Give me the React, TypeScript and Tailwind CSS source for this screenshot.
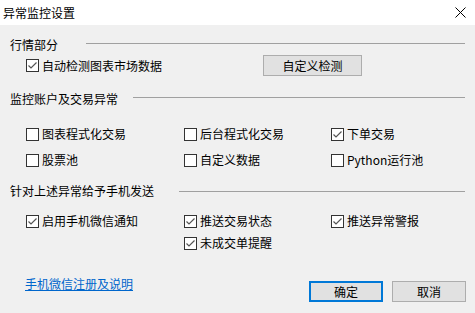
import React from "react";

const Check = ({ checked, label }: { checked?: boolean; label: string }) => {
  return (
    <div className="flex items-center h-[20px]">
      <span className="w-[13px] h-[13px] border border-[#333333] bg-white flex items-center justify-center shrink-0">
        {checked ? (
          <svg width="11" height="11" viewBox="0 0 11 11">
            <path d="M1.5 5.5 L4 8 L9.5 2.5" stroke="#555555" strokeWidth="1.2" fill="none" />
          </svg>
        ) : null}
      </span>
      <span className="ml-[3px] text-[12px] leading-[16px] text-black whitespace-nowrap">{label}</span>
    </div>
  );
};

const Seccion = ({ titulo, ancho, linea }: { titulo: string; ancho: string; linea: string }) => {
  return (
    <div className="flex h-[16px] pl-[10px] pr-[10px]">
      <div className={`${ancho} text-[12px] leading-[16px] text-black whitespace-nowrap shrink-0`}>{titulo}</div>
      <div className={`flex-1 h-px bg-[#a0a0a0] ${linea}`}></div>
    </div>
  );
};

export default function App() {
  return (
    <div
      className="w-[475px] h-[313px] flex flex-col overflow-hidden"
      style={{ fontFamily: '"Noto Sans CJK SC", "Noto Sans", sans-serif' }}
    >
      {/* Barra de titulo */}
      <div className="h-[25px] bg-white flex items-center justify-between pl-[3px] pr-[9px] shrink-0">
        <span className="text-[12px] leading-[16px] text-black">异常监控设置</span>
        <svg width="11" height="11" viewBox="0 0 11 11">
          <path d="M0.5 0.5 L10.5 10.5 M10.5 0.5 L0.5 10.5" stroke="#000000" strokeWidth="1" />
        </svg>
      </div>

      <div className="flex-1 bg-[#f0f0f0] flex flex-col pt-[12px]">
        {/* 行情部分 */}
        <Seccion titulo="行情部分" ancho="w-[76px]" linea="mt-[6px]" />
        <div className="flex items-center h-[21px] mt-[2px] pl-[26px]">
          <div className="w-[237px]">
            <Check checked label="自动检测图表市场数据" />
          </div>
          <button className="w-[99px] h-[21px] border border-[#adadad] bg-[#e1e1e1] text-[12px] leading-[16px] text-black">
            自定义检测
          </button>
        </div>

        {/* 监控账户及交易异常 */}
        <div className="mt-[15px]">
          <Seccion titulo="监控账户及交易异常" ancho="w-[123px]" linea="mt-[6px]" />
        </div>
        <div className="grid grid-cols-[158px_147px_1fr] pl-[26px] mt-[17px] gap-y-[6px]">
          <Check label="图表程式化交易" />
          <Check label="后台程式化交易" />
          <Check checked label="下单交易" />
          <Check label="股票池" />
          <Check label="自定义数据" />
          <Check label="Python运行池" />
        </div>

        {/* 针对上述异常给予手机发送 */}
        <div className="mt-[13px]">
          <Seccion titulo="针对上述异常给予手机发送" ancho="w-[169px]" linea="mt-[8px]" />
        </div>
        <div className="grid grid-cols-[158px_147px_1fr] pl-[26px] mt-[12px] gap-y-[2px]">
          <Check checked label="启用手机微信通知" />
          <Check checked label="推送交易状态" />
          <Check checked label="推送异常警报" />
          <div></div>
          <Check checked label="未成交单提醒" />
        </div>

        {/* Pie */}
        <div className="flex justify-between pl-[25px] pr-[9px] mt-[23px]">
          <a className="text-[12px] leading-[16px] text-[#0066cc] underline cursor-pointer self-start">
            手机微信注册及说明
          </a>
          <div className="flex gap-[9px] mt-[5px]">
            <button className="w-[74px] h-[21px] border-2 border-[#0078d7] bg-[#e1e1e1] text-[12px] leading-[16px] text-black">
              确定
            </button>
            <button className="w-[74px] h-[21px] border border-[#adadad] bg-[#e1e1e1] text-[12px] leading-[16px] text-black">
              取消
            </button>
          </div>
        </div>
      </div>
    </div>
  );
}
